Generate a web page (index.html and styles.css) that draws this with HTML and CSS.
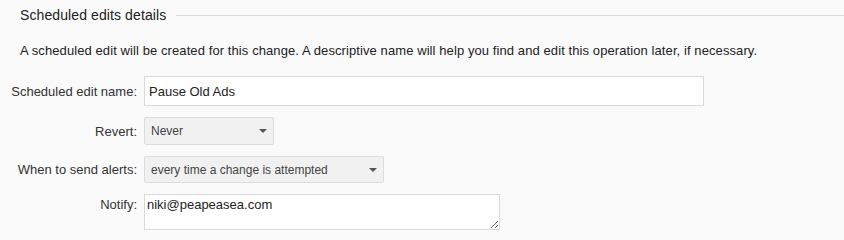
FILE: index.html
```html
<!DOCTYPE html>
<html lang="en">
<head>
  <meta charset="UTF-8" />
  <title>Scheduled edits details</title>
  <link rel="stylesheet" href="styles.css">
</head>
<body>
  <div class="section">
    <div class="section-head">
      <span class="section-title">Scheduled edits details</span>
      <span class="section-rule"></span>
    </div>
    <p class="intro">A scheduled edit will be created for this change. A descriptive name will help you find and edit this operation later, if necessary.</p>
    <form class="form">
      <label class="label" for="name">Scheduled edit name:</label>
      <input class="field text-field" type="text" id="name" value="Pause Old Ads" />

      <label class="label" for="revert">Revert:</label>
      <div class="select revert">
        <span>Never</span>
        <span class="caret"></span>
      </div>

      <label class="label" for="alerts">When to send alerts:</label>
      <div class="select alerts">
        <span>every time a change is attempted</span>
        <span class="caret"></span>
      </div>

      <label class="label label-top" for="notify">Notify:</label>
      <textarea class="field notify" id="notify">niki@peapeasea.com</textarea>
    </form>
  </div>
</body>
</html>
```

FILE: styles.css
```css
body, html {
  margin: 0;
  padding: 0;
  background: #fafafa;
  font-family: "Liberation Sans", Arial, sans-serif;
  color: #222;
}
.section {
  padding: 0 0 0 20px;
}
.section-head {
  display: flex;
  align-items: center;
  height: 30px;
}
.section-title {
  font-size: 14px;
  color: #222;
  margin-right: 10px;
  letter-spacing: 0.1px;
}
.section-rule {
  flex: 1;
  border-top: 1px solid #dcdcdc;
}
.intro {
  font-size: 13px;
  margin: 12px 0 0 0;
  line-height: 18px;
  color: #222;
  letter-spacing: 0.09px;
}
.form {
  display: grid;
  grid-template-columns: 137px auto;
  column-gap: 7px;
  row-gap: 11px;
  align-items: center;
  justify-items: start;
  margin: 16px 0 0 -20px;
  font-size: 13px;
}
.label {
  justify-self: end;
  white-space: nowrap;
  color: #333;
}
.label-top {
  align-self: start;
  padding-top: 3px;
}
.field {
  box-sizing: border-box;
  font-family: "Liberation Sans", Arial, sans-serif;
  background: #fff;
  border: 1px solid #d9d9d9;
  border-radius: 0;
  color: #222;
  margin: 0;
}
.text-field {
  width: 560px;
  height: 30px;
  font-size: 13px;
  padding: 0 4px;
}
.select {
  box-sizing: border-box;
  display: flex;
  align-items: center;
  justify-content: space-between;
  height: 28px;
  padding: 0 6px 0 6px;
  background: #f1f1f1;
  border: 1px solid #dcdcdc;
  border-radius: 2px;
  color: #444;
  font-size: 12px;
}
.revert {
  width: 130px;
}
.alerts {
  width: 240px;
  height: 27px;
}
.caret {
  width: 0;
  height: 0;
  border-left: 4px solid transparent;
  border-right: 4px solid transparent;
  border-top: 4px solid #555;
}
.notify {
  width: 356px;
  height: 36px;
  font-size: 13px;
  padding: 2px 2px;
  resize: vertical;
}
```
